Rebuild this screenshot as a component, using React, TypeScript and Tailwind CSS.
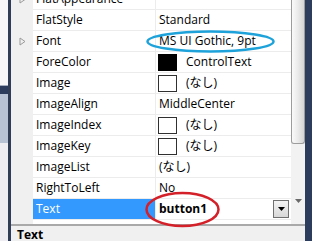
const FONT = "font-['Open_Sans','Noto_Sans_CJK_JP',sans-serif]";

type Row = {
  name: string;
  value?: string;
  expand?: boolean;
  swatch?: "black" | "white";
  selected?: boolean;
};

const rows: Row[] = [
  { name: "FlatAppearance", expand: true },
  { name: "FlatStyle", value: "Standard" },
  { name: "Font", value: "MS UI Gothic, 9pt", expand: true },
  { name: "ForeColor", value: "ControlText", swatch: "black" },
  { name: "Image", value: "(なし)", swatch: "white" },
  { name: "ImageAlign", value: "MiddleCenter" },
  { name: "ImageIndex", value: "(なし)", swatch: "white" },
  { name: "ImageKey", value: "(なし)", swatch: "white" },
  { name: "ImageList", value: "(なし)" },
  { name: "RightToLeft", value: "No" },
  { name: "Text", value: "button1", selected: true },
];

function ExpandArrow() {
  return (
    <svg width="7" height="9" viewBox="0 0 7 9">
      <path d="M1 1 L6 4.5 L1 8 Z" fill="none" stroke="#9a9a9a" strokeWidth="1" />
    </svg>
  );
}

function DropButton() {
  return (
    <div className="flex h-[18px] w-[16px] items-center justify-center border border-[#707070] bg-gradient-to-b from-[#f4f4f4] to-[#d8d8d8]">
      <svg width="7" height="4" viewBox="0 0 7 4">
        <path d="M0 0 H7 L3.5 4 Z" fill="#000" />
      </svg>
    </div>
  );
}

function PropRow({ row }: { row: Row }) {
  return (
    <div className="flex h-[21px] shrink-0">
      <div className="flex w-[22px] items-center justify-center bg-[#f0f0f0] pl-[1px]">
        {row.expand && <ExpandArrow />}
      </div>
      <div
        className={`flex w-[123px] items-center border-b border-r border-[#ececec] pl-[3px] text-[12px] ${
          row.selected ? "bg-[#3399ff] text-white" : "bg-white text-black"
        }`}
      >
        {row.name}
      </div>
      <div className="flex flex-1 items-center border-b border-[#ececec] bg-white pl-[2px] text-[12px] text-black">
        {row.swatch && (
          <div
            className={`mr-[8px] h-[17px] w-[19px] shrink-0 ${
              row.swatch === "black" ? "bg-black" : "border border-[#303030] bg-white"
            }`}
          />
        )}
        <span className={`${row.selected ? "font-bold" : ""} pl-[1px]`}>{row.value}</span>
        {row.selected && (
          <div className="ml-auto mr-[2px]">
            <DropButton />
          </div>
        )}
      </div>
    </div>
  );
}

function Scrollbar() {
  return (
    <div className="flex w-[14px] flex-col bg-[#ececec]">
      <div className="h-[144px] rounded-b-[3px] border border-t-0 border-[#9c9c9c] bg-gradient-to-r from-[#fafafa] via-[#eaeaea] to-[#d4d4d4]" />
      <div className="flex-1 bg-[#f2f2f2]" />
      <div className="flex h-[14px] items-start justify-center bg-[#f2f2f2]">
        <svg width="7" height="4" viewBox="0 0 7 4">
          <path d="M0 0 H7 L3.5 4 Z" fill="#6a6a6a" />
        </svg>
      </div>
      <div className="h-[11px] bg-[#f2f2f2]" />
    </div>
  );
}

export default function App() {
  return (
    <div className={`relative flex h-[241px] w-[312px] overflow-hidden bg-[#f0f0f0] ${FONT}`}>
      {/* left background strip */}
      <div className="flex w-[8px] flex-col">
        <div className="h-[86px] bg-[#f6f6f8] border-b border-[#a4adbd]" />
        <div className="h-[8px] bg-[#2b3c5c]" />
        <div className="h-[49px] bg-[#b7c2d5]" />
        <div className="flex-1 bg-[#eeeef2]" />
      </div>
      <div className="w-[3px] bg-[#2f3d57]" />

      {/* property grid */}
      <div className="flex w-[294px] flex-col">
        <div className="flex h-[226px] overflow-hidden bg-white">
          <div className="-mt-[11px] flex flex-1 flex-col">
            {rows.map((r) => (
              <PropRow key={r.name} row={r} />
            ))}
            <div className="flex flex-1">
              <div className="w-[22px] bg-[#f0f0f0]" />
              <div className="flex-1 bg-white" />
            </div>
          </div>
          <Scrollbar />
        </div>
        <div className="flex-1 border-t-2 border-[#a9a9a9] bg-[#f0f0f0] pl-[6px] pt-[3px] text-[12px] font-bold leading-none text-black">
          Text
        </div>
      </div>

      <div className="flex-1 bg-[#2b3c5c]" />

      {/* annotation ellipses */}
      <svg className="pointer-events-none absolute left-0 top-0" width="312" height="241">
        <ellipse cx="210.5" cy="41.5" rx="63" ry="10" fill="none" stroke="#1ea2da" strokeWidth="2.5" />
        <ellipse cx="182.5" cy="209.5" rx="36" ry="16.5" fill="none" stroke="#d42028" strokeWidth="2.5" />
      </svg>
    </div>
  );
}
